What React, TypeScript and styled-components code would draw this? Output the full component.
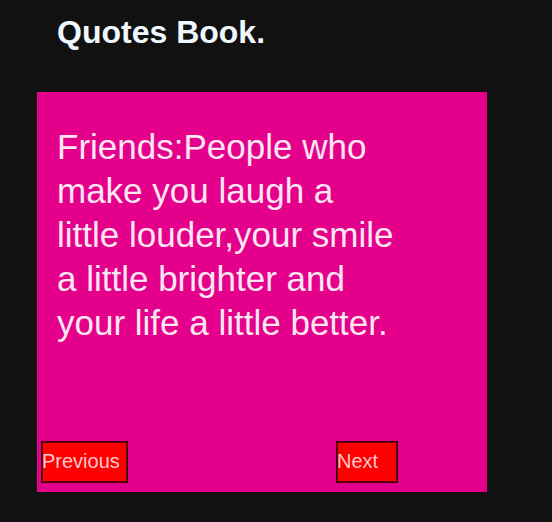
import React, { useState } from "react";
import styled, { createGlobalStyle } from "styled-components";

const Global = createGlobalStyle`
  html, body { margin: 0; padding: 0; background: #111111; }
  body { font-family: "Liberation Sans", Arial, sans-serif; }
`;

const Page = styled.div`
  display: flex;
  flex-direction: column;
  padding: 14px 0 0 37px;
`;

const Title = styled.h1`
  margin: 0 0 41px 20px;
  font-size: 32px;
  line-height: 37px;
  font-weight: bold;
  color: #f0f8ff;
`;

const Card = styled.div`
  width: 450px;
  height: 400px;
  background: #e4008a;
  display: flex;
  flex-direction: column;
  box-sizing: border-box;
  padding: 33px 0 9px 0;
`;

const Quote = styled.p`
  margin: 0 0 0 20px;
  width: 342px;
  font-size: 35px;
  line-height: 44px;
  color: #fbe6f2;
`;

const Controls = styled.div`
  margin-top: auto;
  margin-left: 4px;
  width: 357px;
  display: flex;
  justify-content: space-between;
`;

const NavButton = styled.button<{ $w: number }>`
  width: ${(p) => p.$w}px;
  height: 42px;
  box-sizing: border-box;
  padding: 0 0 2px 0;
  background: #ff0000;
  border: 1px solid #3a0008;
  outline: 1px solid #6a0010;
  outline-offset: -2px;
  color: #ffc6cf;
  font-family: "Liberation Sans", Arial, sans-serif;
  font-size: 20px;
  text-align: left;
  cursor: pointer;
`;

const quotes = [
  "Friends:People who make you laugh a little louder,your smile a little brighter and your life a little better.",
];

export default function App() {
  const [i, setI] = useState(0);
  return (
    <>
      <Global />
      <Page>
        <Title>Quotes Book.</Title>
        <Card>
          <Quote>{quotes[i]}</Quote>
          <Controls>
            <NavButton $w={87} onClick={() => setI((i - 1 + quotes.length) % quotes.length)}>
              Previous
            </NavButton>
            <NavButton $w={62} onClick={() => setI((i + 1) % quotes.length)}>
              Next
            </NavButton>
          </Controls>
        </Card>
      </Page>
    </>
  );
}
